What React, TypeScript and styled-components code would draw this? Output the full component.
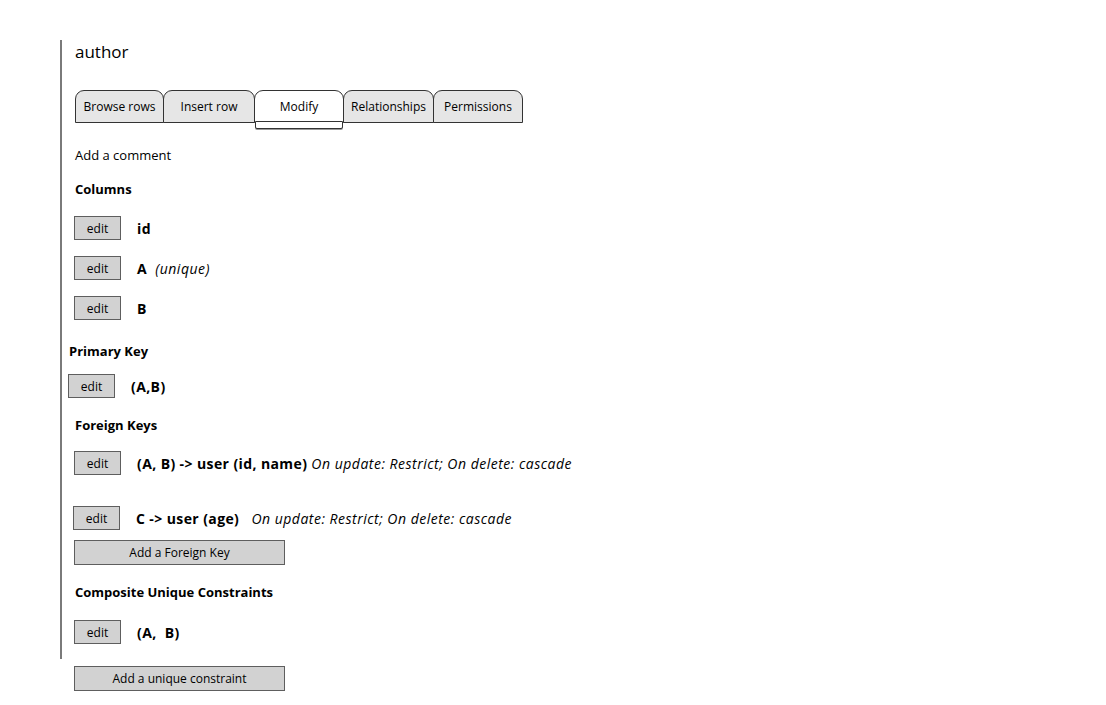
import React from "react";
import styled, { createGlobalStyle } from "styled-components";

const GlobalStyle = createGlobalStyle`
  body {
    margin: 0;
    background: #fff;
    font-family: "Open Sans", "DejaVu Sans", sans-serif;
    color: #000;
  }
`;

const Page = styled.div`
  padding: 40px 0 0 60px;
  width: 1106px;
  height: 705px;
  box-sizing: border-box;
`;

const Panel = styled.div`
  border-left: 2px solid #7a7a7a;
  padding: 0 0 15px 13px;
  display: flex;
  flex-direction: column;
  align-items: flex-start;
`;

const Title = styled.div`
  font-size: 17px;
  line-height: 24px;
  height: 24px;
`;

const TabBar = styled.div`
  display: flex;
  margin-top: 26px;
  height: 38px;
  align-items: flex-start;
`;

const Tab = styled.div<{ $w: number; $active?: boolean }>`
  position: relative;
  width: ${(p) => p.$w}px;
  height: 33px;
  box-sizing: border-box;
  border: 1px solid #333;
  border-radius: 9px 9px 0 0;
  background: ${(p) => (p.$active ? "#fff" : "#e6e6e6")};
  font-size: 12px;
  display: flex;
  align-items: center;
  justify-content: center;
  margin-right: -1px;

  ${(p) =>
    p.$active &&
    `
    &::after {
      content: "";
      position: absolute;
      left: 0;
      right: 0;
      bottom: -7px;
      height: 6px;
      background: #fff;
      border: 1px solid #333;
      border-radius: 0 0 2px 2px;
      box-shadow: 0 1px 0 #999;
    }
  `}
`;

const Note = styled.div<{ $mt: number }>`
  font-size: 13px;
  line-height: 18px;
  margin-top: ${(p) => p.$mt}px;
`;

const Heading = styled.div<{ $mt: number; $shift?: number }>`
  font-size: 13px;
  font-weight: 700;
  line-height: 18px;
  margin-top: ${(p) => p.$mt}px;
  margin-left: ${(p) => p.$shift || 0}px;
`;

const Row = styled.div<{ $mt: number; $shift?: number }>`
  display: flex;
  align-items: center;
  gap: 16px;
  height: 24px;
  margin-top: ${(p) => p.$mt}px;
  margin-left: ${(p) => p.$shift || 0}px;
`;

const EditButton = styled.div`
  width: 47px;
  height: 24px;
  box-sizing: border-box;
  border: 1px solid #5e5e5e;
  background: #d2d2d2;
  font-size: 12px;
  display: flex;
  align-items: center;
  justify-content: center;
`;

const Label = styled.span`
  font-size: 14px;
  font-weight: 700;
  letter-spacing: 0.4px;
  white-space: pre;
`;

const Hint = styled.span`
  font-size: 14px;
  font-style: italic;
  font-weight: 400;
  letter-spacing: 0.5px;
  white-space: pre;
`;

const WideButton = styled.div<{ $mt: number; $ml?: number }>`
  width: 211px;
  height: 25px;
  box-sizing: border-box;
  border: 1px solid #5e5e5e;
  background: #d2d2d2;
  font-size: 12px;
  display: flex;
  align-items: center;
  justify-content: center;
  margin-top: ${(p) => p.$mt}px;
  margin-left: ${(p) => p.$ml || 0}px;
`;

const tabs = [
  { label: "Browse rows", w: 89 },
  { label: "Insert row", w: 92 },
  { label: "Modify", w: 90 },
  { label: "Relationships", w: 91 },
  { label: "Permissions", w: 90 },
];

const App = () => (
  <>
    <GlobalStyle />
    <Page>
      <Panel>
        <Title>author</Title>
        <TabBar>
          {tabs.map((t) => (
            <Tab key={t.label} $w={t.w} $active={t.label === "Modify"}>
              {t.label}
            </Tab>
          ))}
        </TabBar>
        <Note $mt={18}>Add a comment</Note>

        <Heading $mt={16}>Columns</Heading>
        <Row $mt={18} $shift={-1}>
          <EditButton>edit</EditButton>
          <Label>id</Label>
        </Row>
        <Row $mt={16} $shift={-1}>
          <EditButton>edit</EditButton>
          <Label>
            A <Hint> (unique)</Hint>
          </Label>
        </Row>
        <Row $mt={16} $shift={-1}>
          <EditButton>edit</EditButton>
          <Label>B</Label>
        </Row>

        <Heading $mt={22} $shift={-6}>Primary Key</Heading>
        <Row $mt={14} $shift={-7}>
          <EditButton>edit</EditButton>
          <Label>(A,B)</Label>
        </Row>

        <Heading $mt={18}>Foreign Keys</Heading>
        <Row $mt={17} $shift={-1}>
          <EditButton>edit</EditButton>
          <Label>
            (A, B) -&gt; user (id, name) <Hint>On update: Restrict; On delete: cascade</Hint>
          </Label>
        </Row>
        <Row $mt={31} $shift={-2}>
          <EditButton>edit</EditButton>
          <Label>
            C -&gt; user (age)   <Hint>On update: Restrict; On delete: cascade</Hint>
          </Label>
        </Row>
        <WideButton $mt={10} $ml={-1}>Add a Foreign Key</WideButton>

        <Heading $mt={18}>Composite Unique Constraints</Heading>
        <Row $mt={19} $shift={-1}>
          <EditButton>edit</EditButton>
          <Label>(A,  B)</Label>
        </Row>
      </Panel>
      <WideButton $mt={7} $ml={14}>Add a unique constraint</WideButton>
    </Page>
  </>
);

export default App;
